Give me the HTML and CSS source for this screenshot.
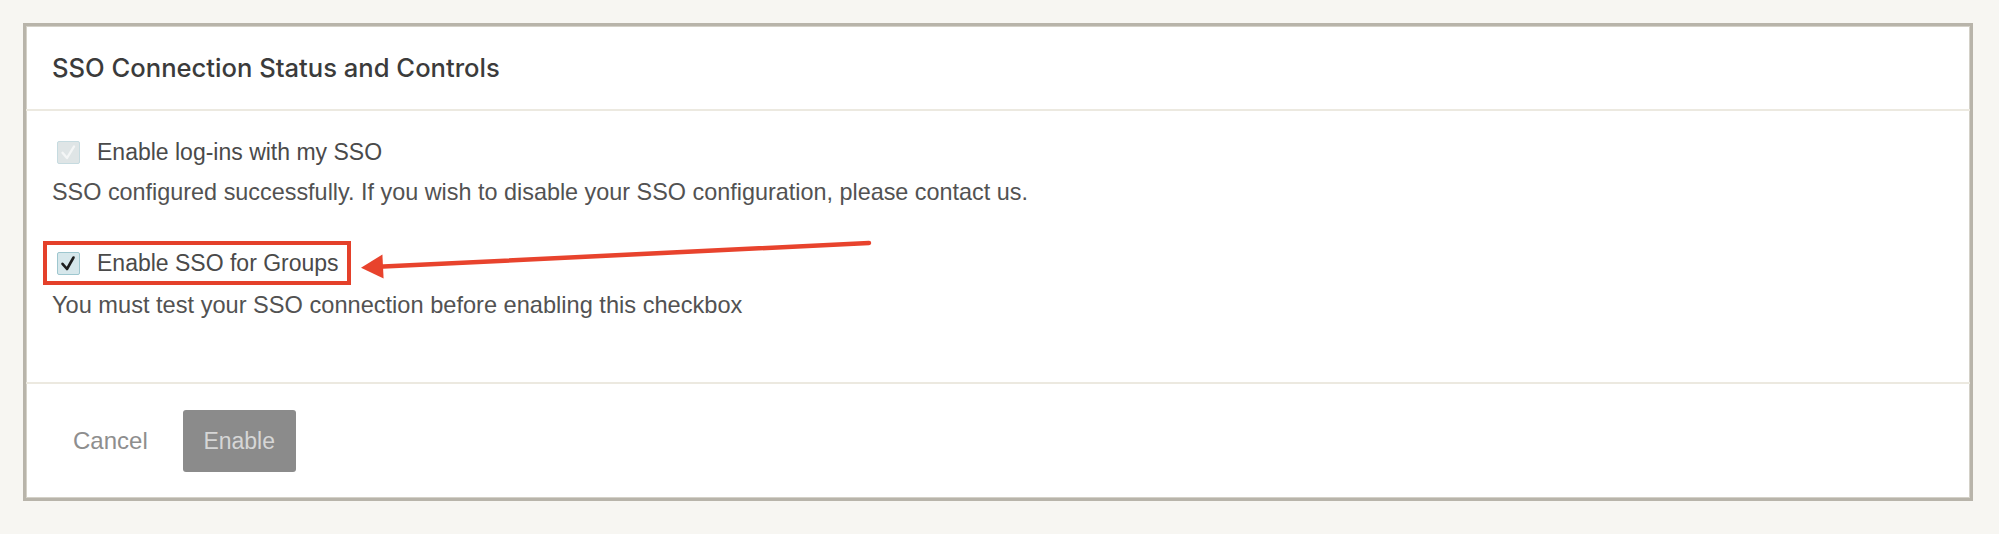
FILE: index.html
```html
<!DOCTYPE html>
<html lang="en">
<head>
<meta charset="utf-8">
<title>SSO Connection Status and Controls</title>
<link rel="stylesheet" href="styles.css">
</head>
<body>
<section class="card">
  <header class="card-header">
    <h2 class="card-title">SSO Connection Status and Controls</h2>
  </header>
  <div class="card-body">
    <label class="option">
      <span class="checkbox checkbox-disabled">
        <svg viewBox="0 0 23 23" width="23" height="23"><path d="M5.5 11.8 L10 17 L17 5.5" fill="none" stroke="#f4f6f6" stroke-width="2.4" stroke-linecap="round" stroke-linejoin="round"/></svg>
      </span>
      <span class="option-label">Enable log-ins with my SSO</span>
    </label>
    <p class="help">SSO configured successfully. If you wish to disable your SSO configuration, please contact us.</p>

    <label class="option option-highlight">
      <span class="checkbox checkbox-checked">
        <svg viewBox="0 0 23 23" width="23" height="23"><path d="M5.5 11.8 L10 17 L16.5 5.5" fill="none" stroke="#1e1e1e" stroke-width="2.6" stroke-linecap="round" stroke-linejoin="round"/></svg>
      </span>
      <span class="option-label">Enable SSO for Groups</span>
    </label>
    <p class="help help-tight">You must test your SSO connection before enabling this checkbox</p>
  </div>
  <footer class="card-footer">
    <button class="btn btn-link" type="button">Cancel</button>
    <button class="btn btn-disabled" type="button">Enable</button>
  </footer>
</section>
<svg class="annotation-arrow" width="1999" height="534" viewBox="0 0 1999 534">
  <line x1="869" y1="243" x2="378" y2="266.8" stroke="#e8432d" stroke-width="4.5" stroke-linecap="round"/>
  <polygon points="361,267.7 382.4,254.6 383.6,278.6" fill="#e8432d"/>
</svg>
</body>
</html>
```

FILE: styles.css
```css
html, body {
  margin: 0;
  padding: 0;
}

body {
  background: #f7f6f2;
  font-family: "Liberation Sans", Arial, sans-serif;
  color: #474747;
  position: relative;
  width: 1999px;
  height: 534px;
  overflow: hidden;
}

.card {
  margin: 23px 26px 0 23px;
  background: #ffffff;
  border: 3px solid #b8b4aa;
  box-shadow: inset 0 0 0 1px #d4d1c8;
  height: 478px;
  box-sizing: border-box;
  display: flex;
  flex-direction: column;
}

.card-header {
  height: 83px;
  display: flex;
  align-items: center;
  padding-left: 26px;
  border-bottom: 2px solid #ece9e0;
  flex: none;
}

.card-title {
  margin: 0;
  font-family: "Inter", "Liberation Sans", sans-serif;
  font-weight: 500;
  font-size: 25.6px;
  color: #3b3b3b;
  letter-spacing: 0;
}

.card-body {
  height: 273px;
  box-sizing: border-box;
  padding: 30px 26px 0 26px;
  border-bottom: 2px solid #ece9e0;
  flex: none;
}

.option {
  display: flex;
  align-items: center;
  height: 23px;
  font-size: 23px;
  line-height: 23px;
}

.checkbox {
  width: 23px;
  height: 23px;
  box-sizing: border-box;
  border-radius: 2px;
  margin-left: 5px;
  margin-right: 17px;
  display: inline-flex;
  flex: none;
  position: relative;
}

.checkbox svg {
  position: absolute;
  left: -1.5px;
  top: -1.5px;
}

.checkbox-disabled {
  background: #dfe5e6;
  border: 1.5px solid #c6dbe0;
}

.checkbox-checked {
  background: #d6e7eb;
  border: 1.5px solid #9ec7cf;
}

.option-label {
  color: #4a4a4a;
  white-space: nowrap;
}

.help {
  margin: 13px 0 0 0;
  font-size: 23.4px;
  line-height: 30px;
  color: #525252;
}

.option-highlight {
  display: inline-flex;
  height: auto;
  margin-top: 34px;
  margin-left: -9px;
  border: 4px solid #e4402a;
  padding: 7px 8px 6px 10px;
}

.option-highlight .checkbox {
  margin-left: 0;
}

.help-tight {
  margin-top: 5px;
  font-size: 23.6px;
}

.card-footer {
  flex: 1;
  display: flex;
  align-items: center;
  padding-left: 24px;
  gap: 13px;
}

.btn {
  font-family: "Liberation Sans", Arial, sans-serif;
  font-size: 23px;
  border: none;
  height: 62px;
  padding: 0 22px;
  border-radius: 3px;
  cursor: default;
}

.btn-link {
  background: transparent;
  color: #8e8e8e;
  font-size: 24px;
  padding: 0 22px 0 23px;
}

.btn-disabled {
  background: #8b8b8b;
  color: #d6d6d6;
  width: 113px;
  padding: 0;
}

.annotation-arrow {
  position: absolute;
  left: 0;
  top: 0;
  pointer-events: none;
}
```
